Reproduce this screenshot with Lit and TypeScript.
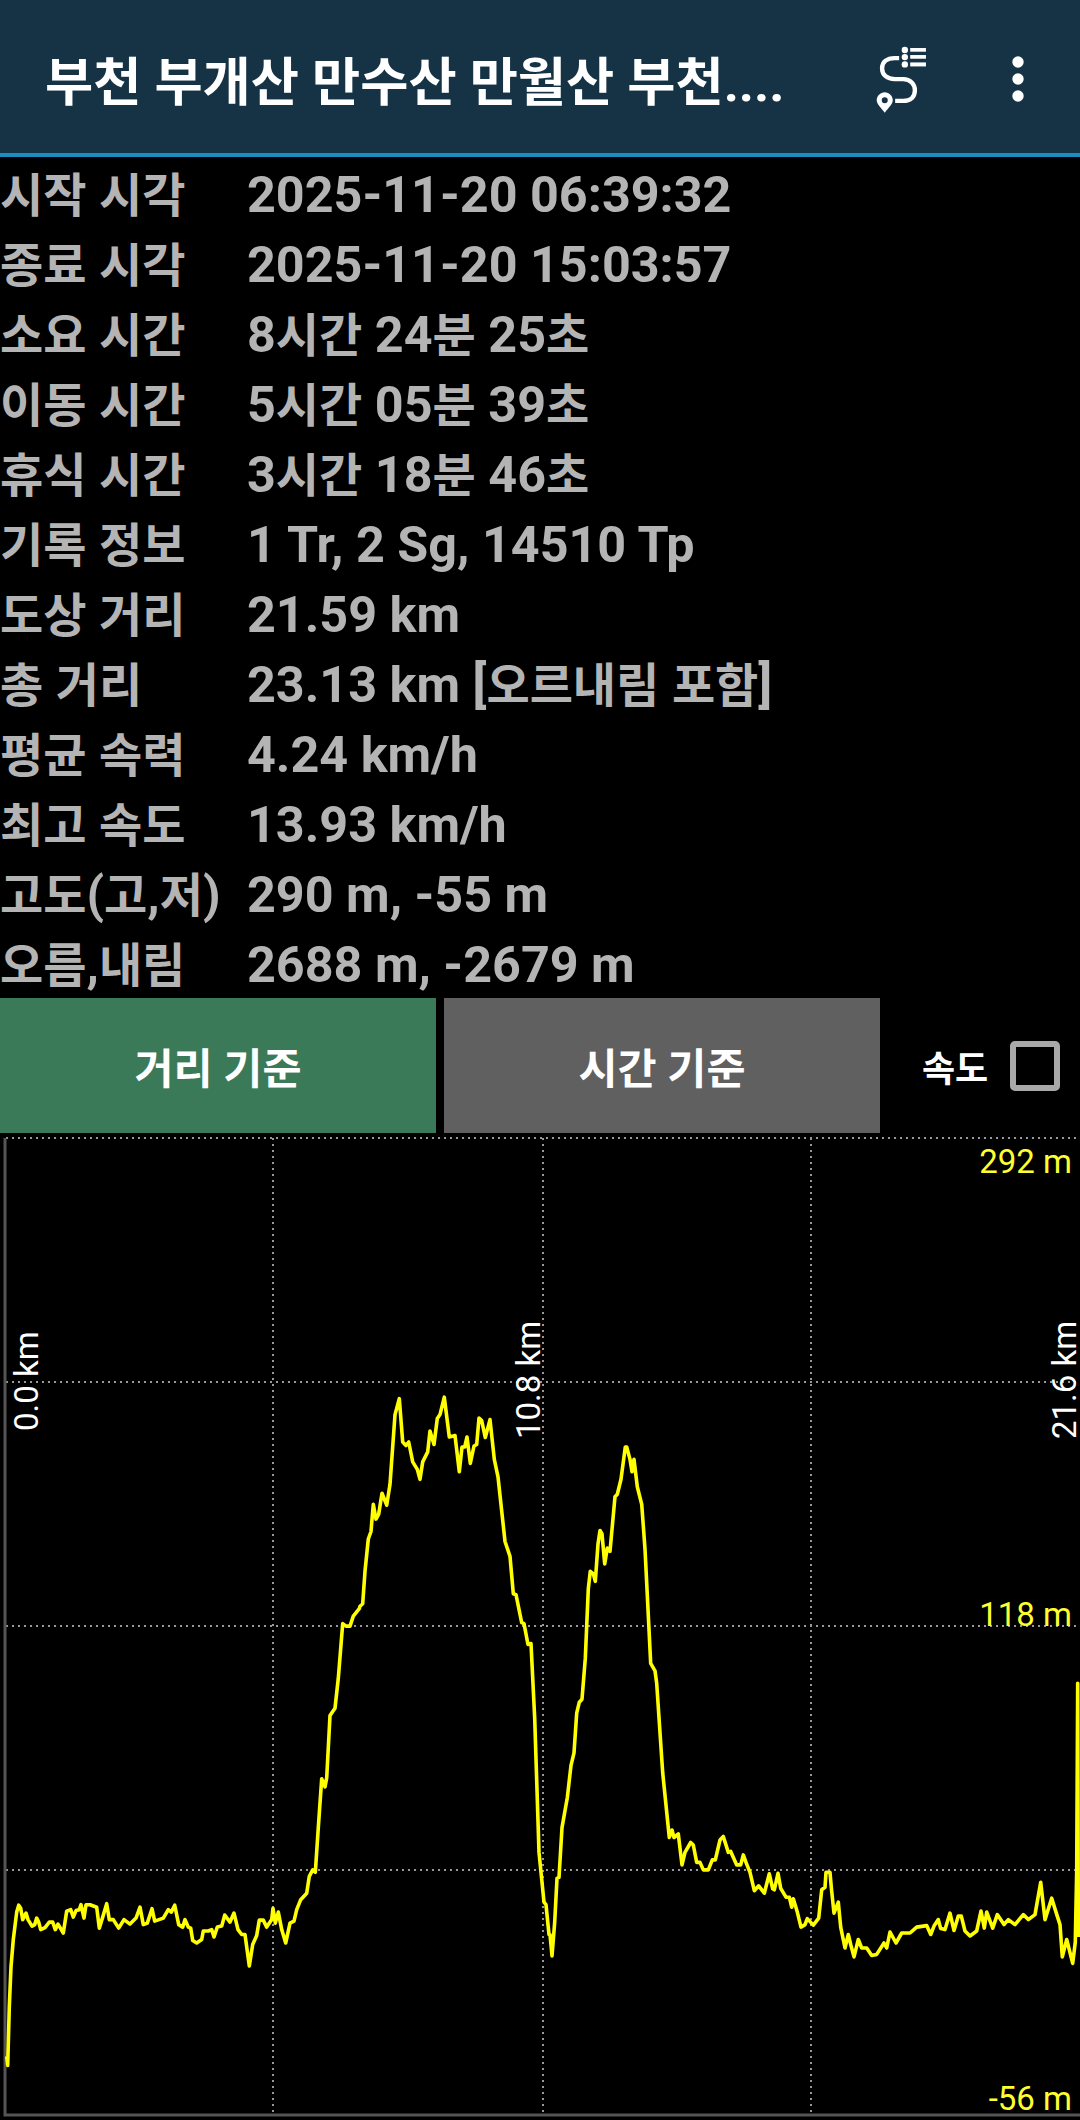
import { LitElement, html, css, svg } from "lit";
import { customElement } from "lit/decorators.js";

const rows: [string, string][] = [
  ["시작 시각", "2025-11-20 06:39:32"],
  ["종료 시각", "2025-11-20 15:03:57"],
  ["소요 시간", "8시간 24분 25초"],
  ["이동 시간", "5시간 05분 39초"],
  ["휴식 시간", "3시간 18분 46초"],
  ["기록 정보", "1 Tr, 2 Sg, 14510 Tp"],
  ["도상 거리", "21.59 km"],
  ["총 거리", "23.13 km [오르내림 포함]"],
  ["평균 속력", "4.24 km/h"],
  ["최고 속도", "13.93 km/h"],
  ["고도(고,저)", "290 m, -55 m"],
  ["오름,내림", "2688 m, -2679 m"],
];

const seg1 = [20,1440,23,1458,28,1340,33,1260,40,1205,50,1150,56,1136,62,1142,68,1165,78,1152,84,1165,96,1178,104,1175,110,1162,116,1170,122,1185,135,1181,148,1170,158,1170,166,1185,174,1174,190,1192,200,1148,212,1145,220,1160,228,1147,238,1145,243,1135,252,1162,258,1135,270,1135,278,1137,290,1140,298,1182,308,1160,320,1133,328,1165,340,1165,356,1182,372,1165,390,1174,408,1162,420,1140,430,1175,442,1172,456,1143,464,1168,490,1162,505,1145,514,1150,524,1136,536,1175,548,1180,555,1165,565,1180,572,1182,578,1207,590,1212,605,1205,610,1188,625,1188,635,1185,642,1200,652,1180,665,1178,674,1156,690,1170,702,1152,714,1185,725,1195,735,1195,748,1258,758,1215,770,1197,778,1166,790,1166,800,1180,815,1165,819,1142,826,1172,835,1150,845,1185,857,1212,870,1172,882,1168,890,1145,902,1125,920,1112,928,1078,938,1065,946,1070,955,980,965,882,975,898,980,880,990,755,1005,740,1015,680,1028,570,1038,575,1050,575,1060,555,1078,540];
const seg2 = [0,535,8,530,15,465,25,400,33,385,40,330,48,360,56,350,66,308,80,332,90,290,105,150,118,118,128,205,138,212,146,205,158,245,172,260,180,280,188,245,203,225,210,183,222,210,232,158,240,150,253,115,268,195,285,192,298,265,306,215,314,215,321,195,331,248,342,213,350,210,357,157,365,162,376,196,390,160,403,240,414,275,435,405,450,435,460,510,468,512,485,568,492,570,504,612,513,610,524,760,537,1030,546,1090,552,1130,558,1135,567,1195,570,1195,576,1238,584,1170,591,1082,597,1080,606,980,622,920,633,855,642,830,650,750,658,728,666,722,676,640,685,500,691,465,700,470,706,485,714,410,720,383,726,390,734,450,742,418,750,425,765,315,772,310,783,280,796,215,800,215,810,240,816,265,822,240,832,295,845,330,855,420,872,650,885,665,890,690,908,870,928,1000,936,985,942,1000,955,993,966,1055,975,1030,992,1010,1000,1015,1010,1050,1020,1050,1030,1065,1045,1065,1057,1045,1066,1045,1080,1005];
const seg3 = [10,998,25,1030,32,1028,50,1055,62,1055,70,1035,78,1050,90,1070,103,1107,116,1097,133,1112,148,1073,158,1103,163,1105,174,1072,182,1102,198,1120,208,1120,215,1140,220,1123,232,1150,243,1180,255,1175,262,1163,280,1176,296,1162,305,1105,315,1100,318,1070,330,1070,334,1100,342,1152,355,1130,362,1180,375,1222,385,1195,392,1215,402,1240,415,1205,425,1222,440,1222,455,1237,470,1235,492,1212,500,1222,510,1190,528,1212,545,1192,570,1192,590,1180,620,1177,632,1195,642,1178,655,1165,662,1183,675,1185,690,1152,702,1187,715,1158,724,1158,735,1188,750,1198,770,1188,783,1148,793,1182,800,1150,818,1182,832,1155,852,1175,865,1165,885,1175,910,1155,925,1165,945,1155,962,1090,975,1165,995,1122,1008,1150,1020,1175,1027,1240,1040,1205,1058,1253,1066,1210,1070,1066,1073,690,1075,1200];

const CHART_TOP = 1133;
function convert(seg: number[], offset: number): string {
  const out: string[] = [];
  for (let i = 0; i < seg.length; i += 2) {
    const x = offset + seg[i] / 3;
    const y = 1340 + seg[i + 1] / 2.01 - CHART_TOP;
    out.push(`${x.toFixed(1)},${y.toFixed(1)}`);
  }
  return out.join(" ");
}
const linePoints = [convert(seg1, 0), convert(seg2, 360), convert(seg3, 720)].join(" ");

const hLines = [5, 249, 493, 737];
const vLines = [273, 543, 811];

function mixed(text: string) {
  return text
    .split(/([\uac00-\ud7a3]+)/)
    .map((part, i) => (i % 2 ? html`<span class="ko">${part}</span>` : part));
}

@customElement("app-root")
export class AppRoot extends LitElement {
  static styles = css`
    :host {
      display: block;
      width: 1080px;
      height: 2120px;
      background: #000;
      overflow: hidden;
      font-family: Roboto, "Noto Sans CJK KR", sans-serif;
    }
    .bar {
      display: flex;
      align-items: center;
      height: 153px;
      background: #153345;
      border-bottom: 4px solid #1a90c0;
      box-sizing: content-box;
    }
    .title {
      flex: 1;
      padding-left: 45px;
      margin-top: 2px;
      color: #fff;
      font-size: 52.4px;
      font-weight: 700;
      white-space: nowrap;
      overflow: hidden;
    }
    .route {
      width: 57px;
      height: 72px;
      margin-top: 6px;
      margin-right: 82px;
    }
    .dots {
      width: 12px;
      height: 46px;
      margin-top: 4px;
      margin-right: 56px;
    }
    .table {
      display: grid;
      grid-template-columns: 247px 1fr;
      grid-auto-rows: 70px;
      height: 840px;
      align-items: center;
      padding-top: 3px;
      box-sizing: border-box;
      color: #b4b4b4;
      font-size: 50.3px;
      line-height: 70px;
      font-weight: 700;
      white-space: nowrap;
    }
    .ko {
      font-size: 47px;
    }
    .controls {
      display: flex;
      height: 135px;
      margin-top: 1px;
    }
    .btn {
      width: 436px;
      display: flex;
      align-items: center;
      justify-content: center;
      color: #fff;
      font-size: 42.5px;
      font-weight: 700;
    }
    .green { background: #3b7a58; }
    .gray { background: #606060; margin-left: 8px; }
    .speed {
      display: flex;
      align-items: center;
      margin-left: 42px;
      color: #fff;
      font-size: 36px;
      font-weight: 700;
    }
    .check {
      width: 50px;
      height: 50px;
      box-sizing: border-box;
      border: 6px solid #a8a8a8;
      border-radius: 5px;
      margin-left: 22px;
    }
    .chart {
      display: block;
      width: 1080px;
      height: 987px;
    }
    .grid { stroke: #989898; stroke-width: 2; stroke-dasharray: 2 4; fill: none; }
    .frame { stroke: #555; stroke-width: 3; fill: none; }
    .elev { stroke: #ffff00; stroke-width: 3.6; fill: none; stroke-linejoin: round; }
    .ylab { fill: #ffff30; font-size: 33px; text-anchor: end; }
    .xlab { fill: #fff; font-size: 33px; }
  `;

  render() {
    return html`
      <div class="bar">
        <div class="title">부천 부개산 만수산 만월산 부천....</div>
        <svg class="route" viewBox="100 70 170 215" fill="#fff">
          <path d="M178 112 H165 C140 112 127 125 127 143 C127 162 142 175 165 175 H190 C212 175 225 190 225 208 C225 228 212 240 190 240 H166" fill="none" stroke="#fff" stroke-width="13" />
          <path fill-rule="evenodd" d="M135 275 C125 262 111 250 111 238 C111 225 122 214 135 214 C148 214 159 225 159 238 C159 250 145 262 135 275 Z M135 229 A9 9 0 1 0 135 247 A9 9 0 1 0 135 229 Z" />
          <circle cx="195" cy="88" r="9.5" />
          <circle cx="195" cy="109" r="9.5" />
          <circle cx="195" cy="131" r="9.5" />
          <rect x="211" y="82" width="47" height="11" />
          <rect x="211" y="103" width="47" height="11" />
          <rect x="211" y="125" width="47" height="12" />
        </svg>
        <svg class="dots" viewBox="0 0 12 46" fill="#fff">
          <circle cx="6" cy="6" r="5.7" />
          <circle cx="6" cy="23" r="5.7" />
          <circle cx="6" cy="40" r="5.7" />
        </svg>
      </div>
      <div class="table">
        ${rows.map(([k, v]) => html`<div>${mixed(k)}</div><div>${mixed(v)}</div>`)}
      </div>
      <div class="controls">
        <div class="btn green">거리 기준</div>
        <div class="btn gray">시간 기준</div>
        <div class="speed">속도<div class="check"></div></div>
      </div>
      <svg class="chart" viewBox="0 0 1080 987">
        ${hLines.map((y) => svg`<line class="grid" x1="6" x2="1080" y1=${y} y2=${y} />`)}
        ${vLines.map((x) => svg`<line class="grid" x1=${x} x2=${x} y1="5" y2="979" />`)}
        <path class="frame" d="M5 5 V982 H1080" />
        <text class="ylab" x="1072" y="40">292 m</text>
        <text class="ylab" x="1072" y="493">118 m</text>
        <text class="ylab" x="1072" y="977">-56 m</text>
        <text class="xlab" transform="translate(38 298) rotate(-90)">0.0 km</text>
        <text class="xlab" transform="translate(540 306) rotate(-90)">10.8 km</text>
        <text class="xlab" transform="translate(1076 306) rotate(-90)">21.6 km</text>
        <polyline class="elev" points=${linePoints} />
      </svg>
    `;
  }
}
